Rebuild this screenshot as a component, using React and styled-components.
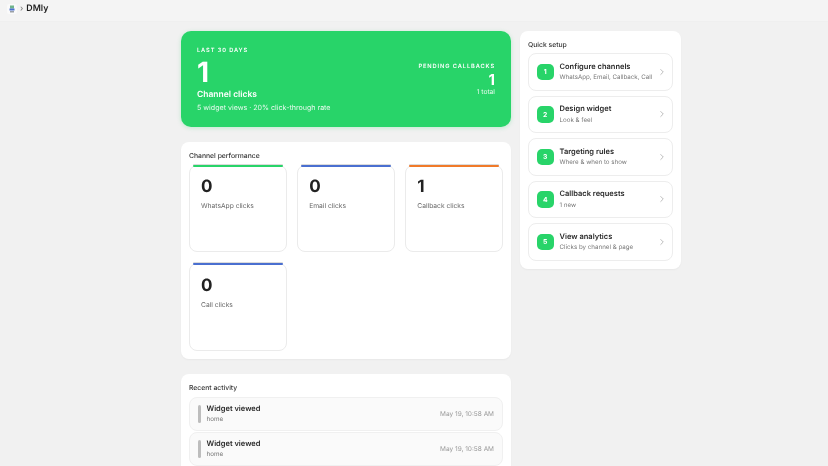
import React from "react";
import styled, { createGlobalStyle } from "styled-components";

const Global = createGlobalStyle`
  html, body { margin: 0; padding: 0; height: 466px; overflow: hidden; background: #f1f1f1; }
  body { font-family: Inter, "Liberation Sans", sans-serif; color: #1a1a1a; text-rendering: geometricPrecision; }
  * { box-sizing: border-box; }
`;
const Page = styled.div`height: 466px; overflow: hidden; will-change: transform;`;
const TopBar = styled.header`
  height: 22px; display: flex; align-items: flex-start; gap: 3px; padding: 3px 0 0 7px;
  background: #f4f4f4; border-bottom: 1px solid #efefef;
  font-size: 8.8px; font-weight: 600; line-height: 11px; color: #1f1f1f;
`;
const Logo = styled.svg`width: 10px; height: 10px; flex: none; margin-top: 1px;`;
const Crumb = styled.span`font-size: 8px; color: #8a8a8a; line-height: 10px;`;
const Main = styled.main`
  display: grid; grid-template-columns: 330px 161px; gap: 9px;
  padding: 9px 0 0 181px; align-items: start;
`;
const Left = styled.div`display: flex; flex-direction: column; gap: 15px;`;
const Hero = styled.section`
  height: 95.5px; border-radius: 10px; background: #28d469; color: #fff; padding: 16px 16px 0;
  display: flex; justify-content: space-between; box-shadow: 0 1px 4px rgba(40,212,105,.25);
`;
const Eyebrow = styled.div`font-size: 5.7px; font-weight: 600; letter-spacing: .9px; line-height: 8px;`;
const HeroNumber = styled.div`font-size: 28px; font-weight: 700; line-height: 34px;`;
const HeroTitle = styled.div`font-size: 8.5px; font-weight: 600; line-height: 11px; margin-top: 1px;`;
const HeroSub = styled.div`font-size: 7.1px; line-height: 10px; margin-top: 2px; opacity: .9;`;
const HeroRight = styled.div`text-align: right; padding-top: 16px;`;
const HeroRightNum = styled.div`font-size: 15px; font-weight: 700; line-height: 15px; margin-top: 1px;`;
const HeroRightSub = styled.div`font-size: 6.7px; line-height: 9px; margin-top: 1px; opacity: .9;`;
const Card = styled.section`background: #fff; border-radius: 8px; padding: 9px 8px 8px; box-shadow: 0 1px 2px rgba(0,0,0,.04);`;
const CardTitle = styled.h2`margin: 0; font-size: 6.8px; font-weight: 500; line-height: 10px; color: #333;`;
const StatGrid = styled.div`display: grid; grid-template-columns: repeat(3, 1fr); gap: 11px 10.5px; margin-top: 4px;`;
const Stat = styled.div`
  position: relative; height: 87.5px; border: 1px solid #ebebeb; border-radius: 8px; padding: 12.5px 11px;
  &::before {
    content: ""; position: absolute; top: -1px; left: 3px; right: 3px; height: 2px; border-radius: 1px;
    background: ${p => p.$color}; box-shadow: 0 -1px 0 rgba(0,0,0,.14);
  }
`;
const StatNum = styled.div`font-size: 17px; font-weight: 700; line-height: 18px; color: #222;`;
const StatLabel = styled.div`font-size: 6.7px; line-height: 10px; color: #666; margin-top: 5px;`;
const ActivityList = styled.div`display: flex; flex-direction: column; gap: 1px; margin-top: 4px;`;
const Row = styled.div`
  height: 34px; display: flex; align-items: center; gap: 6px; padding: 0 8px; background: #fafafa;
  border: 1px solid #f0f0f0; border-radius: 8px;
`;
const Bar = styled.div`width: 2.5px; height: 18px; border-radius: 2px; background: #bdbdbd;`;
const RowBody = styled.div`flex: 1;`;
const RowTitle = styled.div`font-size: 7.5px; font-weight: 600; line-height: 11px; color: #2a2a2a;`;
const RowSub = styled.div`font-size: 6.3px; line-height: 9px; color: #777; margin-top: 1.5px;`;
const RowTime = styled.div`font-size: 6.5px; color: #999;`;
const SetupList = styled.div`display: flex; flex-direction: column; gap: 5px; margin-top: 3px;`;
const SetupItem = styled.div`
  height: 37.5px; display: flex; align-items: center; gap: 6px; padding: 0 5px 0 8px;
  border: 1px solid #ededed; border-radius: 8px;
`;
const Step = styled.div`
  width: 16.5px; height: 16.5px; flex: none; border-radius: 5px; background: #28d469; color: #fff;
  display: flex; align-items: center; justify-content: center; font-size: 6.8px; font-weight: 700;
`;
const SetupBody = styled.div`flex: 1; min-width: 0;`;
const SetupTitle = styled.div`font-size: 7.5px; font-weight: 600; line-height: 10px; color: #2a2a2a;`;
const SetupSub = styled.div`font-size: 6.2px; line-height: 9px; color: #777; margin-top: 1.5px; white-space: nowrap;`;
const Chevron = styled.svg`width: 10px; height: 10px; flex: none; color: #b0b0b0;`;

const stats = [
  ["0", "WhatsApp clicks", "#28d469"],
  ["0", "Email clicks", "#4a6fd0"],
  ["1", "Callback clicks", "#f07a2a"],
  ["0", "Call clicks", "#4a6fd0"],
];
const steps = [
  ["Configure channels", "WhatsApp, Email, Callback, Call"],
  ["Design widget", "Look & feel"],
  ["Targeting rules", "Where & when to show"],
  ["Callback requests", "1 new"],
  ["View analytics", "Clicks by channel & page"],
];

export default function App() {
  return (
    <Page>
      <Global />
      <TopBar>
        <Logo viewBox="0 0 10 10">
          <rect width="10" height="10" rx="2" fill="#fafafa" />
          <rect x="3" y="1.5" width="4" height="3" fill="#6fb48c" />
          <rect x="2.5" y="4.5" width="5" height="2" fill="#4a6fd0" />
          <rect x="3" y="7" width="4" height="1.5" fill="#9aa0a6" />
        </Logo>
        <Crumb>›</Crumb>
        <span>DMly</span>
      </TopBar>
      <Main>
        <Left>
          <Hero>
            <div>
              <Eyebrow>LAST 30 DAYS</Eyebrow>
              <HeroNumber>1</HeroNumber>
              <HeroTitle>Channel clicks</HeroTitle>
              <HeroSub>5 widget views · 20% click-through rate</HeroSub>
            </div>
            <HeroRight>
              <Eyebrow>PENDING CALLBACKS</Eyebrow>
              <HeroRightNum>1</HeroRightNum>
              <HeroRightSub>1 total</HeroRightSub>
            </HeroRight>
          </Hero>
          <Card>
            <CardTitle>Channel performance</CardTitle>
            <StatGrid>
              {stats.map(([n, l, c]) => (
                <Stat key={l} $color={c}>
                  <StatNum>{n}</StatNum>
                  <StatLabel>{l}</StatLabel>
                </Stat>
              ))}
            </StatGrid>
          </Card>
          <Card>
            <CardTitle>Recent activity</CardTitle>
            <ActivityList>
              {[0, 1].map(i => (
                <Row key={i}>
                  <Bar />
                  <RowBody>
                    <RowTitle>Widget viewed</RowTitle>
                    <RowSub>home</RowSub>
                  </RowBody>
                  <RowTime>May 19, 10:58 AM</RowTime>
                </Row>
              ))}
            </ActivityList>
          </Card>
        </Left>
        <Card>
          <CardTitle>Quick setup</CardTitle>
          <SetupList>
            {steps.map(([t, s], i) => (
              <SetupItem key={t}>
                <Step>{i + 1}</Step>
                <SetupBody>
                  <SetupTitle>{t}</SetupTitle>
                  <SetupSub>{s}</SetupSub>
                </SetupBody>
                <Chevron viewBox="0 0 24 24" fill="none" stroke="currentColor" strokeWidth="2" strokeLinecap="round" strokeLinejoin="round">
                  <path d="m9 18 6-6-6-6" />
                </Chevron>
              </SetupItem>
            ))}
          </SetupList>
        </Card>
      </Main>
    </Page>
  );
}
